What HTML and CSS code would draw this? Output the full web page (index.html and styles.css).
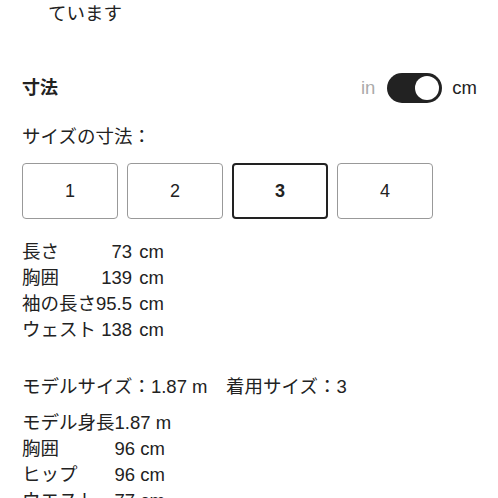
FILE: index.html
```html
<!DOCTYPE html>
<html lang="ja">
<head>
<meta charset="utf-8">
<link rel="stylesheet" href="styles.css">
</head>
<body>
<div class="page">
  <p class="note">ています</p>

  <div class="head-row">
    <h2 class="title">寸法</h2>
    <div class="units">
      <span class="unit unit-off">in</span>
      <span class="switch"><span class="knob"></span></span>
      <span class="unit">cm</span>
    </div>
  </div>

  <p class="label">サイズの寸法：</p>

  <div class="sizes">
    <button class="size">1</button>
    <button class="size">2</button>
    <button class="size size-on">3</button>
    <button class="size">4</button>
  </div>

  <table class="dims">
    <tr><td>長さ</td><td class="v">73 cm</td></tr>
    <tr><td>胸囲</td><td class="v">139 cm</td></tr>
    <tr><td>袖の長さ</td><td class="v">95.5 cm</td></tr>
    <tr><td>ウェスト</td><td class="v">138 cm</td></tr>
  </table>

  <p class="model">モデルサイズ：1.87 m　着用サイズ：3</p>

  <table class="dims model-dims">
    <tr><td>モデル身長</td><td>1.87 m</td></tr>
    <tr><td>胸囲</td><td>96 cm</td></tr>
    <tr><td>ヒップ</td><td>96 cm</td></tr>
    <tr><td>ウエスト</td><td>77 cm</td></tr>
  </table>
</div>
</body>
</html>
```
FILE: styles.css
```css
html, body {
  margin: 0;
  padding: 0;
  background: #fff;
}
body {
  font-family: "Liberation Sans", "Noto Sans CJK JP", sans-serif;
  color: #222;
  font-size: 18.5px;
  line-height: 26px;
  overflow: hidden;
  height: 498px;
}
.page {
  padding: 1px 21px 0 22px;
}
p { margin: 0; }
.note {
  margin-left: 26px;
}
.head-row {
  margin-top: 46px;
  height: 30px;
  display: flex;
  align-items: center;
  justify-content: space-between;
}
.title {
  margin: 0;
  font-size: 18px;
  font-weight: 700;
}
.units {
  display: flex;
  align-items: center;
  gap: 10px;
}
.unit {
  font-size: 18.5px;
}
.unit-off {
  color: #aaa;
  margin-right: 2px;
}
.switch {
  width: 55px;
  height: 30px;
  border-radius: 15px;
  background: #222;
  display: flex;
  align-items: center;
  justify-content: flex-end;
  padding-right: 3px;
  box-sizing: border-box;
}
.knob {
  width: 24px;
  height: 24px;
  border-radius: 50%;
  background: #fff;
}
.label {
  margin-top: 21px;
}
.sizes {
  margin-top: 13px;
  display: flex;
  gap: 9px;
}
.size {
  width: 96px;
  height: 56px;
  box-sizing: border-box;
  background: #fff;
  border: 1px solid #999;
  border-radius: 4px;
  font-family: "Liberation Sans", "Noto Sans CJK JP", sans-serif;
  font-size: 18px;
  color: #222;
  padding: 0;
}
.size-on {
  border: 2px solid #222;
  font-weight: 700;
}
.dims {
  border-collapse: collapse;
  margin-top: 20px;
}
.dims td {
  padding: 0;
  height: 26px;
  white-space: nowrap;
}
.dims .v {
  text-align: right;
  word-spacing: 2px;
}
.model {
  margin-top: 31px;
}
.model-dims {
  margin-top: 10px;
}
```
